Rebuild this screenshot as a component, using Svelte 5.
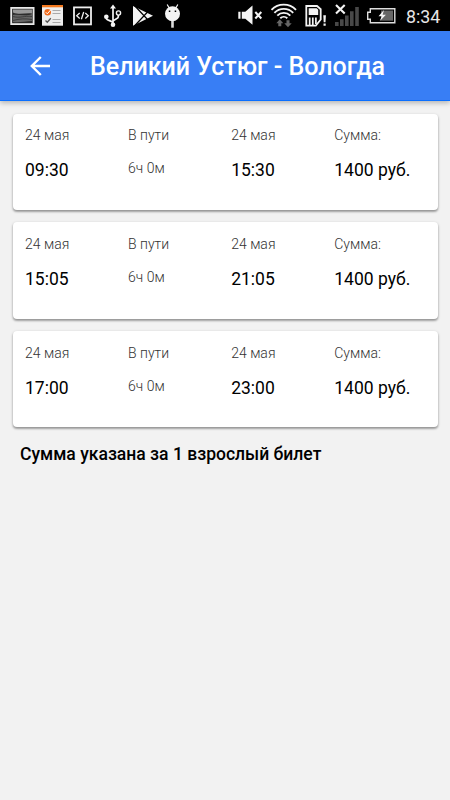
<script>
    const title = 'Великий Устюг - Вологда';

    const trips = [
        { date: '24 мая', departure: '09:30', duration: '6ч 0м', arrival: '15:30', price: 1400 },
        { date: '24 мая', departure: '15:05', duration: '6ч 0м', arrival: '21:05', price: 1400 },
        { date: '24 мая', departure: '17:00', duration: '6ч 0м', arrival: '23:00', price: 1400 },
    ];
</script>

<div class="screen">
    <div class="status-bar">
        <svg width="190" height="31" viewBox="0 0 190 31" fill="none">
            <!-- picture -->
            <rect x="11.2" y="7.9" width="22.4" height="16.2" fill="#2c2c2c" stroke="#e8e8e8" stroke-width="1.8" />
            <path d="M13 9.5h19v4c-6-1-12 2-19-1z" fill="#999" />
            <path d="M13 15c6-1 12 2 19-1v7c-7 0-12 2-19 1z" fill="#666" />
            <path d="M13 16.5c7 2 11-1 19 0M13 20.5c7-2 12-2 19-1" stroke="#333" stroke-width=".8" />
            <!-- task list -->
            <path d="M42 5h21v20.7H42z" fill="#eee" />
            <path d="M42 5h21v2.3H42z" fill="#f47a20" />
            <circle cx="47.7" cy="12.3" r="3.3" fill="#f06a1b" />
            <path d="M45.8 12.2l1.5 1.6 3.5-4" stroke="#fff" stroke-width="1" />
            <path d="M45.5 20.5l1.8 1.8 3.5-4" stroke="#555" stroke-width="1.3" />
            <path d="M52.5 10.5h8M52.5 13.5h8M52.5 19.5h8M52.5 22.5h8" stroke="#aaa" stroke-width="1.2" />
            <!-- code -->
            <rect x="74" y="7.4" width="17" height="17" stroke="#eee" stroke-width="1.8" />
            <path d="M79.7 13l-3 2.7 3 2.7M85.3 13l3 2.7-3 2.7M83.7 12l-2.3 7.3" stroke="#eee" stroke-width="1.3" />
            <!-- usb -->
            <path d="M113 7v17M106.3 17v1.5c0 1.8 6.7 2.5 6.7 4.5M118.3 15v2c0 2-5.3 2.5-5.3 4.5" stroke="#f4f4f4" stroke-width="1.7" />
            <path d="M113 4.5l3 4h-6z" fill="#f4f4f4" />
            <circle cx="106.3" cy="16.7" r="2.3" fill="#f4f4f4" />
            <circle cx="118.5" cy="13" r="2.1" stroke="#f4f4f4" stroke-width="1.4" />
            <circle cx="113" cy="24.7" r="2.3" fill="#f4f4f4" />
            <!-- play store -->
            <path d="M133 6l20 9.8-20 9.9z" fill="#f4f4f4" />
            <path d="M134 5l14 15M134 26.5l14-15" stroke="#000" stroke-width="1.2" />
            <!-- android debug -->
            <path d="M167.2 4.5l2.5 4.5M177.8 4.5l-2.5 4.5" stroke="#f4f4f4" stroke-width="1.2" />
            <circle cx="172.5" cy="13.8" r="7.5" fill="#f4f4f4" />
            <path d="M171.2 21h2.6v6.7h-2.6z" fill="#ddd" />
            <path d="M168.8 10.5h1.5V12h-1.5zM174.7 10.5h1.5V12h-1.5z" fill="#000" />
        </svg>

        <svg class="right" width="170" height="31" viewBox="230 0 170 31" fill="none">
            <!-- muted -->
            <path d="M238.3 11.7h2.2v7h-2.2zM241.8 11.7h3.5l7.2-6.2v19.3l-7.2-6.1h-3.5z" fill="#f4f4f4" />
            <path d="M255.3 12l6 6.5M261.3 12l-6 6.5" stroke="#f4f4f4" stroke-width="2" />
            <!-- wifi -->
            <path d="M271.5 9.8a17.2 17.2 0 0 1 24.5 0M274.4 12.9a13 13 0 0 1 18.8 0M277.3 15.7a9 9 0 0 1 13 0M280.3 18.3a5 5 0 0 1 7 0" stroke="#f4f4f4" stroke-width="1.9" />
            <path d="M279.8 19.3l3.5 3.9h-2v3h-3v-3h-2zM288 27.3l-3.7-4h2.2v-3h3v3h2.2z" fill="#666" />
            <!-- sim card -->
            <path d="M306.3 6h10.7l3.7 3.2v10.3l-4.9 6.2h-9.5z" stroke="#f4f4f4" stroke-width="1.8" />
            <path d="M308.7 8.3h8l1.5 1.5v5.2h-9.5z" fill="#f4f4f4" />
            <path d="M309.7 17.5v7.8M312.8 17.5v7.8M315.9 17.5v6.5" stroke="#f4f4f4" stroke-width="1.7" />
            <path d="M323.3 15.3h2.6l-.4 7h-1.8zM323.5 23.6h2.2v2.2h-2.2z" fill="#f4f4f4" />
            <!-- mobile signal -->
            <path d="M335 22h3.6v4H335zM340 19.3h3.6V26H340zM345 15.5h3.6V26H345zM350 11.3h3.6V26H350zM355.2 7h3.6v19h-3.6z" fill="#484848" />
            <path d="M336 5l8.7 8.6M344.7 5l-8.7 8.6" stroke="#f4f4f4" stroke-width="2.1" />
            <!-- battery -->
            <path d="M370.3 8.7h24.5v14h-24.5v-3.5h-2.6v-7h2.6z" stroke="#ddd" stroke-width="1.4" />
            <path d="M381 10.5h12v10.2h-12z" fill="#666" />
            <path d="M384 10l-5.5 6.2h3.2l-2 5 6.2-6.5h-3.3z" fill="#f4f4f4" />
        </svg>
        <span class="clock">8:34</span>
    </div>

    <header>
        <button class="back" aria-label="Назад">
            <svg width="20" height="20" viewBox="0 0 20 20" fill="none" stroke="#fff" stroke-width="2.4">
                <path d="M20 10H2M10.8 1L1.8 10l9 9" />
            </svg>
        </button>
        <h1>{title}</h1>
    </header>

    <main>
        {#each trips as trip}
            <div class="card">
                <div class="col">
                    <span class="label">{trip.date}</span>
                    <span class="value">{trip.departure}</span>
                </div>
                <div class="col">
                    <span class="label">В пути</span>
                    <span class="duration">{trip.duration}</span>
                </div>
                <div class="col">
                    <span class="label">{trip.date}</span>
                    <span class="value">{trip.arrival}</span>
                </div>
                <div class="col">
                    <span class="label">Сумма:</span>
                    <span class="value">{trip.price} руб.</span>
                </div>
            </div>
        {/each}
        <p class="note">Сумма указана за 1 взрослый билет</p>
    </main>
</div>

<style>
    :global(body) {
        background: #f2f2f2;
    }

    .screen {
        height: 800px;
        overflow: hidden;
        background: #f2f2f2;
        font-family: Roboto, sans-serif;
        color: #000;
    }

    .status-bar {
        display: flex;
        align-items: center;
        height: 31px;
        background: #000;
    }

    .right {
        margin-left: 40px;
    }

    .clock {
        margin-left: 6px;
        padding-top: 2px;
        font-size: 17.8px;
        line-height: 29px;
        color: #e6e6e6;
    }

    header {
        display: flex;
        align-items: center;
        box-sizing: border-box;
        height: 70px;
        padding-left: 30px;
        background: #387ef5;
        border-bottom: 1px solid #0a6fff;
        box-shadow: 0 2px 5px rgba(0, 0, 0, 0.26);
    }

    .back {
        display: flex;
        padding: 0;
        border: 0;
        background: none;
    }

    h1 {
        margin: 0 0 0 40px;
        padding-top: 2px;
        font-size: 25px;
        font-weight: 500;
        line-height: 30px;
        color: #fff;
        white-space: nowrap;
    }

    main {
        padding: 12.5px;
    }

    .card {
        display: grid;
        grid-template-columns: repeat(4, 103.1px);
        box-sizing: border-box;
        height: 96.3px;
        margin-bottom: 12.5px;
        padding: 12.5px;
        background: #fff;
        border-radius: 4px;
        box-shadow: 0 2px 2px rgba(0, 0, 0, 0.24), 0 1px 3px rgba(0, 0, 0, 0.25);
    }

    .col {
        display: flex;
        flex-direction: column;
        white-space: nowrap;
    }

    .label,
    .duration {
        font-size: 14px;
        font-weight: 300;
        line-height: 18px;
        color: #333;
    }

    .duration {
        margin-top: 15px;
    }

    .value {
        margin-top: 15px;
        font-size: 17.5px;
        line-height: 22px;
    }

    .note {
        margin: 0;
        padding: 3px 7.5px;
        font-size: 17.55px;
        font-weight: 500;
        line-height: 22px;
    }
</style>
